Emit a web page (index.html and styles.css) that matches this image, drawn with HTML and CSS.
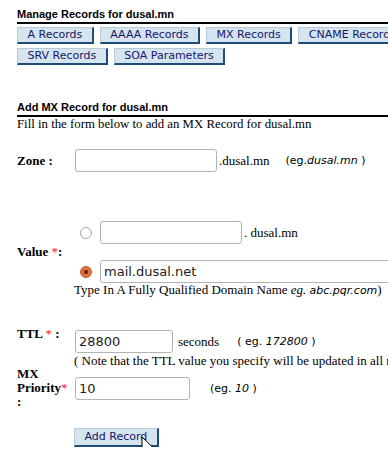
FILE: index.html
```html
<!DOCTYPE html>
<html lang="en">
<head>
  <meta charset="UTF-8" />
  <title>Add MX Record</title>
  <link rel="stylesheet" href="styles.css">
</head>
<body>
  <div class="page">
    <h3 class="section-title">Manage Records for dusal.mn</h3>
    <div class="record-tabs">
      <button class="tab-btn">A Records</button>
      <button class="tab-btn">AAAA Records</button>
      <button class="tab-btn">MX Records</button>
      <button class="tab-btn">CNAME Records</button>
      <button class="tab-btn">SRV Records</button>
      <button class="tab-btn">SOA Parameters</button>
    </div>

    <h3 class="section-title add-title">Add MX Record for dusal.mn</h3>
    <p class="intro">Fill in the form below to add an MX Record for dusal.mn</p>

    <form class="record-form">
      <div class="row row-zone">
        <label class="field-label">Zone :</label>
        <div class="field">
          <input type="text" class="txt zone-input">
          <span class="suffix">.dusal.mn</span>
          <span class="hint">(eg.<i>dusal.mn</i> )</span>
        </div>
      </div>

      <div class="row row-value">
        <label class="field-label">Value <span class="req">*</span>:</label>
        <div class="field value-options">
          <div class="option">
            <input type="radio" name="valtype" class="radio">
            <input type="text" class="txt host-input">
            <span class="suffix">. dusal.mn</span>
          </div>
          <div class="option">
            <input type="radio" name="valtype" class="radio" checked>
            <input type="text" class="txt fqdn-input" value="mail.dusal.net">
          </div>
        </div>
      </div>
      <p class="help">Type In A Fully Qualified Domain Name <i>eg.</i> <i class="sans">abc.pqr.com</i>)</p>

      <div class="row row-ttl">
        <label class="field-label">TTL <span class="req">*</span> :</label>
        <div class="field">
          <input type="text" class="txt ttl-input" value="28800">
          <span class="suffix seconds">seconds</span>
          <span class="hint ttl-hint">( eg. <i>172800</i> )</span>
        </div>
      </div>
      <p class="help note">( Note that the TTL value you specify will be updated in all records of this zone )</p>

      <div class="row row-priority">
        <label class="field-label">MX Priority<span class="req">*</span> :</label>
        <div class="field">
          <input type="text" class="txt prio-input" value="10">
          <span class="hint prio-hint">(eg. <i>10</i> )</span>
        </div>
      </div>

      <div class="actions">
        <button type="button" class="tab-btn submit-btn">Add Record</button>
        <svg class="cursor" width="13" height="21" viewBox="0 0 13 21">
          <path d="M1 1 L1 16 L4.5 12.5 L7.5 19.5 L10 18.5 L7 11.5 L12 11.5 Z" fill="#fff" stroke="#000" stroke-width="1" stroke-linejoin="round"/>
        </svg>
      </div>
    </form>
  </div>
</body>
</html>
```

FILE: styles.css
```css
html, body {
  overflow: hidden;
}

body {
  margin: 0;
  background: #ffffff;
  color: #000000;
  font-family: 'Liberation Serif', serif;
  font-size: 13px;
}

.page {
  width: 440px;
  padding: 8px 0 0 17px;
}

.section-title {
  font-family: 'Liberation Sans', Arial, sans-serif;
  font-size: 11px;
  font-weight: bold;
  margin: 0;
  padding-bottom: 1px;
  border-bottom: 2px solid #000;
  line-height: 13px;
}

.record-tabs {
  display: flex;
  flex-wrap: wrap;
  gap: 4px 6px;
  margin-top: 3px;
}

.tab-btn {
  font-family: 'DejaVu Sans', Verdana, sans-serif;
  font-size: 11px;
  color: #15156b;
  background: #d5e5ef;
  border-style: solid;
  border-width: 1px 2px 2px 1px;
  border-color: #b9cad6 #1d4c78 #1d4c78 #b9cad6;
  border-radius: 0;
  padding: 0 9.5px;
  height: 17px;
  line-height: 14px;
  cursor: pointer;
}

.add-title {
  margin-top: 36px;
}

.intro {
  margin: 0;
  line-height: 15px;
  font-size: 12.8px;
}

.record-form {
  margin-top: 17px;
}

.row {
  display: flex;
  align-items: center;
}

.field-label {
  width: 52px;
  padding-right: 6px;
  font-weight: bold;
  line-height: 14px;
}

.req {
  color: #e8262a;
  font-weight: normal;
}

.field {
  display: flex;
  align-items: center;
  white-space: nowrap;
}

.txt {
  box-sizing: border-box;
  height: 23px;
  border: 1px solid #b3b3b3;
  border-radius: 3px;
  padding: 0 3px;
  font-family: 'DejaVu Sans', sans-serif;
  font-size: 13px;
  color: #222;
  background: #fff;
}

.suffix {
  margin-left: 2px;
}

.hint {
  font-family: 'DejaVu Sans', Verdana, sans-serif;
  font-size: 11px;
  margin-left: 16px;
}

.hint i, .help i.sans {
  font-family: 'DejaVu Sans', Verdana, sans-serif;
}

.zone-input {
  width: 142px;
}

.row-value {
  margin-top: 49px;
}

.value-options {
  flex-direction: column;
  align-items: flex-start;
  gap: 16px;
}

.option {
  display: flex;
  align-items: center;
}

.radio {
  appearance: none;
  -webkit-appearance: none;
  box-sizing: border-box;
  width: 12px;
  height: 12px;
  margin: 0 8px 0 5px;
  border: 1px solid #a5a5a5;
  border-radius: 50%;
  background: #fff;
}

.radio:checked {
  border-color: #c4512a;
  background: radial-gradient(circle, #6d2a17 0 2px, #e3703f 2.5px);
}

.host-input {
  width: 142px;
}

.fqdn-input {
  width: 300px;
}

.help {
  margin: 0 0 0 57px;
  line-height: 13px;
  white-space: nowrap;
}

.help i.sans {
  font-size: 11px;
}

.row-ttl {
  align-items: flex-start;
  margin-top: 33px;
}

.row-ttl .field-label {
  margin-top: -3px;
}

.ttl-input {
  width: 98px;
}

.seconds {
  margin-left: 5px;
}

.ttl-hint {
  margin-left: 18px;
}

.note {
  margin-top: 1px;
  line-height: 14px;
}

.row-priority {
  margin-top: -1px;
}

.prio-input {
  width: 115px;
}

.prio-hint {
  margin-left: 20px;
}

.actions {
  position: relative;
  margin: 19px 0 0 57px;
}

.submit-btn {
  height: 19px;
}

.cursor {
  position: absolute;
  left: 67px;
  top: 8px;
}
```
